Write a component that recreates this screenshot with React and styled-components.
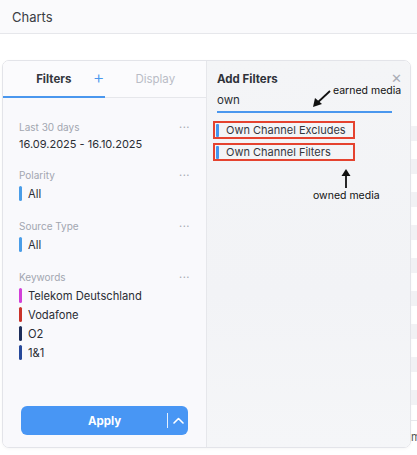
import React from "react";
import styled, { createGlobalStyle } from "styled-components";

const GlobalStyle = createGlobalStyle`
  html, body {
    margin: 0;
    padding: 0;
    background: #ffffff;
    font-family: Inter, "Noto Sans", "Liberation Sans", sans-serif;
    color: #2b2e35;
  }
  * { box-sizing: border-box; }
`;

const Page = styled.div`
  width: 417px;
  height: 455px;
  overflow: hidden;
  display: flex;
  flex-direction: column;
`;

const TopBar = styled.div`
  height: 34px;
  flex: none;
  display: flex;
  align-items: center;
  padding-left: 12px;
  background: #fafafc;
  border-bottom: 1px solid #e6e7eb;
  font-size: 13px;
  color: #3a3d44;
`;

const Content = styled.div`
  display: flex;
  padding: 26px 0 0 2px;
  flex: 1;
`;

const Panel = styled.div`
  width: 409px;
  height: 388px;
  flex: none;
  display: flex;
  border: 1px solid #e3e4e9;
  border-radius: 7px;
  overflow: hidden;
  box-shadow: 0 1px 3px rgba(0, 0, 0, 0.04);
`;

const LeftPane = styled.div`
  width: 204px;
  flex: none;
  display: flex;
  flex-direction: column;
  background: #f9f9fc;
  border-right: 1px solid #e6e7eb;
`;

const Tabs = styled.div`
  height: 37px;
  flex: none;
  display: flex;
  border-bottom: 1px solid #e6e7eb;
  background: #fbfbfd;
`;

const Tab = styled.div`
  position: relative;
  width: ${p => p.$width}px;
  display: flex;
  align-items: center;
  justify-content: center;
  font-size: 11.5px;
  font-weight: ${p => (p.$active ? 700 : 400)};
  color: ${p => (p.$active ? "#34373e" : "#b9bcc6")};
  border-bottom: 2px solid ${p => (p.$active ? "#4a97ee" : "transparent")};
  margin-bottom: -1px;
`;

const PlusButton = styled.span`
  position: absolute;
  right: 0;
  top: 6px;
  font-size: 18px;
  font-weight: 300;
  color: #4a97ee;
`;

const FilterList = styled.div`
  flex: 1;
  padding: 22px 16px 0 16px;
  display: flex;
  flex-direction: column;
`;

const Section = styled.div`
  margin-bottom: ${p => p.$gap}px;
`;

const SectionHead = styled.div`
  display: flex;
  justify-content: space-between;
  align-items: center;
  height: 14px;
  font-size: 10px;
  color: #a2a6b0;
`;

const Dots = styled.span`
  font-size: 11px;
  letter-spacing: 0.5px;
  color: #a7aab3;
  margin-top: -6px;
`;

const DateValue = styled.div`
  margin-top: 3px;
  font-size: 11px;
  color: #2b2e35;
`;

const ItemList = styled.div`
  margin-top: 2px;
`;

const Item = styled.div`
  display: flex;
  align-items: center;
  gap: 6px;
  height: 19px;
  font-size: 11.2px;
  color: #2b2e35;
`;

const Bar = styled.span`
  width: 3px;
  height: 15px;
  border-radius: 1.5px;
  background: ${p => p.$color};
`;

const ApplyWrap = styled.div`
  padding: 0 18px 12px 18px;
`;

const ApplyButton = styled.div`
  position: relative;
  height: 29px;
  border-radius: 6px;
  background: #4896f4;
  color: #ffffff;
  font-size: 11.5px;
  font-weight: 700;
  display: flex;
  align-items: center;
  justify-content: center;
`;

const ApplyToggle = styled.span`
  position: absolute;
  right: 0;
  top: 7px;
  width: 21px;
  height: 15px;
  border-left: 1px solid #e6f0fe;
  display: flex;
  align-items: center;
  justify-content: center;
`;

const RightPane = styled.div`
  flex: 1;
  position: relative;
  padding: 9px 18px 0 10px;
  background: linear-gradient(180deg, #f4f5f7 0%, #f2f3f6 60%, #f5f6f8 100%);
`;

const RightHead = styled.div`
  display: flex;
  justify-content: space-between;
  align-items: center;
  height: 18px;
  font-size: 11.5px;
  font-weight: 700;
  color: #2f3239;
`;

const Close = styled.span`
  font-size: 13px;
  font-weight: 300;
  color: #a9acb5;
  margin-right: -10px;
  margin-top: -2px;
`;

const SearchInput = styled.div`
  margin-top: 4px;
  height: 21px;
  border-bottom: 2px solid #4a97ee;
  font-size: 11.5px;
  color: #2b2e35;
  line-height: 16px;
`;

const Options = styled.div`
  margin-top: 8px;
  margin-left: -4px;
  display: flex;
  flex-direction: column;
  gap: 4px;
`;

const Option = styled.div`
  width: 142px;
  height: 18px;
  border: 2px solid #e5432f;
  display: flex;
  align-items: center;
  gap: 7px;
  padding-left: 1px;
  font-size: 11px;
  white-space: nowrap;
  color: #34373e;
`;

const OptionBar = styled.span`
  width: 3px;
  height: 13px;
  background: #4596ef;
  border-radius: 1px;
`;

const Note = styled.div`
  position: absolute;
  left: ${p => p.$x}px;
  top: ${p => p.$y}px;
  display: flex;
  flex-direction: ${p => p.$dir};
  align-items: ${p => p.$align};
  font-size: 10.5px;
  white-space: nowrap;
  color: #111;
`;

const Backdrop = styled.div`
  flex: 1;
  min-width: 0;
  padding-top: 66px;
  display: flex;
  flex-direction: column;
  gap: 18px;
`;

const BackRow = styled.div`
  height: 15px;
  background: #f1f1f4;
`;

const BackFoot = styled.div`
  margin-top: -3px;
  border-top: 1px solid #e6e7eb;
  font-size: 11px;
  color: #555;
  padding-top: 9px;
  white-space: nowrap;
  overflow: hidden;
`;

const keywords = [
  { name: "Telekom Deutschland", color: "#d23fd8" },
  { name: "Vodafone", color: "#c9322a" },
  { name: "O2", color: "#1d2d5a" },
  { name: "1&1", color: "#27499a" }
];

const App = () => {
  return (
    <>
      <GlobalStyle />
      <Page>
        <TopBar>Charts</TopBar>
        <Content>
          <Panel>
            <LeftPane>
              <Tabs>
                <Tab $width={102} $active>
                  Filters
                  <PlusButton>+</PlusButton>
                </Tab>
                <Tab $width={102}>Display</Tab>
              </Tabs>
              <FilterList>
                <Section $gap={17}>
                  <SectionHead>
                    Last 30 days<Dots>...</Dots>
                  </SectionHead>
                  <DateValue>16.09.2025 - 16.10.2025</DateValue>
                </Section>
                <Section $gap={16}>
                  <SectionHead>
                    Polarity<Dots>...</Dots>
                  </SectionHead>
                  <ItemList>
                    <Item>
                      <Bar $color="#4a9de8" />
                      All
                    </Item>
                  </ItemList>
                </Section>
                <Section $gap={16}>
                  <SectionHead>
                    Source Type<Dots>...</Dots>
                  </SectionHead>
                  <ItemList>
                    <Item>
                      <Bar $color="#4a9de8" />
                      All
                    </Item>
                  </ItemList>
                </Section>
                <Section $gap={0}>
                  <SectionHead>
                    Keywords<Dots>...</Dots>
                  </SectionHead>
                  <ItemList>
                    {keywords.map(k => (
                      <Item key={k.name}>
                        <Bar $color={k.color} />
                        {k.name}
                      </Item>
                    ))}
                  </ItemList>
                </Section>
              </FilterList>
              <ApplyWrap>
                <ApplyButton>
                  Apply
                  <ApplyToggle>
                    <svg width="11" height="7" viewBox="0 0 11 7">
                      <path d="M1 6 L5.5 1.5 L10 6" fill="none" stroke="#fff" strokeWidth="1.6" strokeLinecap="round" strokeLinejoin="round" />
                    </svg>
                  </ApplyToggle>
                </ApplyButton>
              </ApplyWrap>
            </LeftPane>
            <RightPane>
              <RightHead>
                Add Filters<Close>✕</Close>
              </RightHead>
              <SearchInput>own</SearchInput>
              <Options>
                <Option>
                  <OptionBar />
                  Own Channel Excludes
                </Option>
                <Option>
                  <OptionBar />
                  Own Channel Filters
                </Option>
              </Options>
              <Note $x={104} $y={23} $dir="row" $align="flex-start">
                <svg width="22" height="20" viewBox="0 0 22 20" style={{ marginTop: 5 }}>
                  <path d="M19 2 L5 15" stroke="#111" strokeWidth="1.8" />
                  <path d="M2 18 L4 9 L11 15 Z" fill="#111" />
                </svg>
                <span>earned media</span>
              </Note>
              <Note $x={106} $y={108} $dir="column" $align="center">
                <svg width="10" height="19" viewBox="0 0 10 19">
                  <path d="M5 5 L5 19" stroke="#111" strokeWidth="1.8" />
                  <path d="M0.5 7 L5 0 L9.5 7 Z" fill="#111" />
                </svg>
                <span style={{ marginTop: 1 }}>owned media</span>
              </Note>
            </RightPane>
          </Panel>
          <Backdrop>
            {[0, 1, 2, 3, 4, 5, 6, 7, 8].map(i => (
              <BackRow key={i} />
            ))}
            <BackFoot>m</BackFoot>
          </Backdrop>
        </Content>
      </Page>
    </>
  );
};

export default App;
